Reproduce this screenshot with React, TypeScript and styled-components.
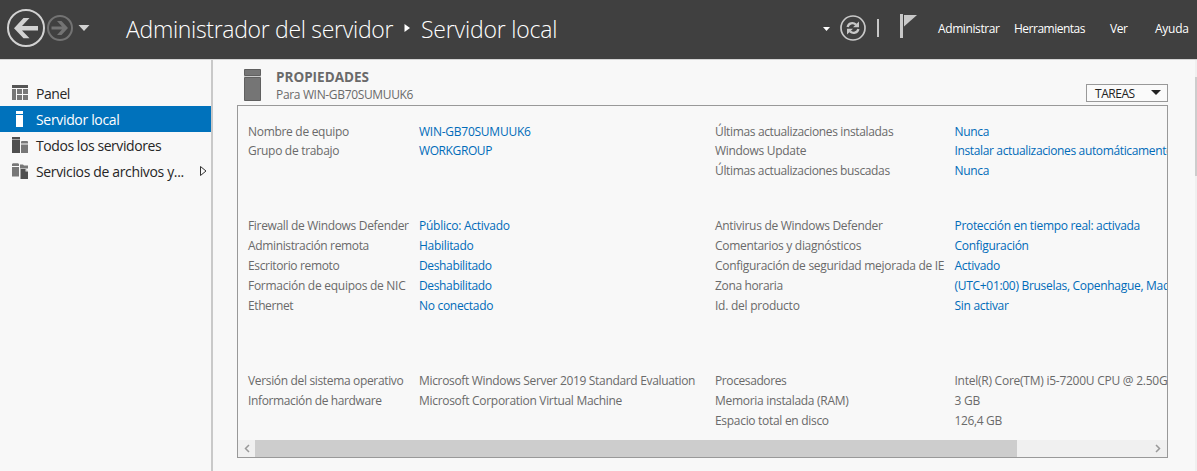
import React from 'react';
import styled, { createGlobalStyle } from 'styled-components';

const Global = createGlobalStyle`
  * { box-sizing: border-box; }
  body { margin: 0; background: #f8f8f8; overflow: hidden; }
`;
const font = `'Open Sans', 'Noto Sans', sans-serif`;

const Window = styled.div`
  width: 1197px; height: 471px; display: flex; flex-direction: column;
  font-family: ${font}; font-size: 12px; color: #6a6a6a; background: #f8f8f8;
  white-space: nowrap; overflow: hidden;
`;
const Header = styled.header`
  height: 60px; flex: none; display: flex; background: #404040; color: #fff;
  border-bottom: 1px solid #d4d4d4;
`;
const NavButtons = styled.div`width: 126px; flex: none;`;
const Crumbs = styled.h1<{ $space: number }>`
  margin: 0; flex: none; font-size: 23px; font-weight: 300; line-height: 59px;
  letter-spacing: ${p => p.$space}px;
`;
const CrumbFirst = styled(Crumbs)`width: 277px;`;
const CrumbArrow = styled.svg`width: 18px; height: 59px; flex: none;`;
const Tools = styled.div`margin-left: auto; width: 118px; flex: none;`;
const Menu = styled.nav`display: flex; width: 259px; flex: none; line-height: 58px; color: #fff;`;
const MenuItem = styled.span<{ $w: number; $space?: number }>`
  width: ${p => p.$w}px; flex: none; letter-spacing: ${p => p.$space ?? 0}px;
`;
const Body = styled.div`display: flex; flex: 1; min-height: 0;`;
const Sidebar = styled.aside`
  width: 213px; flex: none; padding-top: 20px; border-right: 2px solid #c9c9c9;
`;
const SideItem = styled.div<{ $active?: boolean; $space?: number }>`
  height: 26px; display: flex; align-items: center; padding-left: 11px; font-size: 14px;
  letter-spacing: ${p => p.$space ?? 0}px;
  color: ${p => (p.$active ? '#fff' : '#262626')};
  background: ${p => (p.$active ? '#0072bc' : 'transparent')};
`;
const SideIcon = styled.svg`width: 18px; height: 18px; flex: none; margin-right: 7px;`;
const Expand = styled.svg`width: 9px; height: 12px; margin-left: auto; margin-right: 3px;`;
const Main = styled.main`flex: 1; padding: 7px 27px 0 24px; min-width: 0;`;
const PanelHead = styled.div`display: flex; height: 38px;`;
const ServerIcon = styled.svg`width: 24px; height: 38px; margin-left: 6px; margin-right: 9px; flex: none;`;
const Heading = styled.h2`
  margin: 0; font-size: 13.5px; line-height: 20px; font-weight: 700; color: #6a6a6a; letter-spacing: 0;
`;
const Sub = styled.div`line-height: 15px; letter-spacing: -0.34px;`;
const Tasks = styled.button`
  margin: 17px 0 0 auto; width: 82px; height: 18px; padding: 0 6px 0 8px; border: 1px solid #999;
  background: #fafafa; color: #222; font: 12px ${font}; letter-spacing: -0.45px;
  display: flex; align-items: center; justify-content: space-between;
`;
const Panel = styled.section`
  width: 931px; height: 353px; border: 1px solid #999; display: flex; flex-direction: column; overflow: hidden;
`;
const Content = styled.div`flex: 1; padding: 15px 0 0 10px;`;
const Group = styled.div<{ $gap: number }>`margin-bottom: ${p => p.$gap}px;`;
const Row = styled.div`
  display: grid; grid-template-columns: 171px 296px 239.5px 260px; height: 20px; line-height: 20px;
  ${Group}:first-child &:first-child { line-height: 22px; }
`;
const Cell = styled.span<{ $link?: boolean; $space: number }>`
  color: ${p => (p.$link ? '#006bb8' : '#6a6a6a')}; letter-spacing: ${p => p.$space}px;
`;
const HScroll = styled.div`height: 17px; flex: none; display: flex; background: #f0f0f0;`;
const ScrollArrow = styled.svg`width: 17px; height: 17px; flex: none;`;
const Thumb = styled.div`width: 762px; background: #cdcdcd; margin-right: auto;`;
const VScroll = styled.div`width: 2px; flex: none; padding-top: 17px; background: #f0f0f0;`;
const VThumb = styled.div`height: 99px; background: #cdcdcd;`;

type CellData = [text: string, space?: number];
type RowData = { cells: CellData[] };
const D = -0.3;
const groups: { gap: number; link: boolean; rows: RowData[] }[] = [
  { gap: 35, link: true, rows: [
    { cells: [['Nombre de equipo'], ['WIN-GB70SUMUUK6', -0.25], ['Últimas actualizaciones instaladas', -0.35], ['Nunca']] },
    { cells: [['Grupo de trabajo'], ['WORKGROUP', -0.4], ['Windows Update'], ['Instalar actualizaciones automáticamente', -0.36]] },
    { cells: [[''], [''], ['Últimas actualizaciones buscadas', -0.36], ['Nunca']] },
  ] },
  { gap: 55, link: true, rows: [
    { cells: [['Firewall de Windows Defender', -0.33], ['Público: Activado', -0.25], ['Antivirus de Windows Defender'], ['Protección en tiempo real: activada', -0.32]] },
    { cells: [['Administración remota', -0.36], ['Habilitado'], ['Comentarios y diagnósticos'], ['Configuración']] },
    { cells: [['Escritorio remoto', -0.35], ['Deshabilitado', -0.35], ['Configuración de seguridad mejorada de IE', -0.29], ['Activado']] },
    { cells: [['Formación de equipos de NIC', -0.27], ['Deshabilitado', -0.35], ['Zona horaria', -0.35], ['(UTC+01:00) Bruselas, Copenhague, Madrid, París']] },
    { cells: [['Ethernet', -0.4], ['No conectado'], ['Id. del producto', -0.25], ['Sin activar']] },
  ] },
  { gap: 0, link: false, rows: [
    { cells: [['Versión del sistema operativo', -0.34], ['Microsoft Windows Server 2019 Standard Evaluation', -0.33], ['Procesadores', -0.4], ['Intel(R) Core(TM) i5-7200U CPU @ 2.50GHz', -0.25]] },
    { cells: [['Información de hardware', -0.37], ['Microsoft Corporation Virtual Machine'], ['Memoria instalada (RAM)'], ['3 GB', -0.25]] },
    { cells: [[''], [''], ['Espacio total en disco'], ['126,4 GB', -0.35]] },
  ] },
];

export default function App() {
  return (
    <Window>
      <Global />
      <Header>
        <NavButtons>
          <svg width="126" height="59" fill="none">
            <circle cx="26" cy="28" r="18" stroke="#d2d2d2" strokeWidth="2" />
            <path d="M14 28.300 23.500 18H29.500L22 26H38V30.600H22L29.500 38.300H23.500Z" fill="#d2d2d2" />
            <circle cx="60" cy="28" r="12" stroke="#737373" strokeWidth="2" />
            <path d="M68 28 61.500 21H57L62 26.500H51.500V29.500H62L57 35H61.500Z" fill="#737373" />
            <path d="M78.500 25H89.500L84 31Z" fill="#d2d2d2" />
          </svg>
        </NavButtons>
        <CrumbFirst $space={-0.31}>Administrador del servidor</CrumbFirst>
        <CrumbArrow><path d="M1.500 24 7 28 1.500 32Z" fill="#fff" /></CrumbArrow>
        <Crumbs $space={-0.2}>Servidor local</Crumbs>
        <Tools>
          <svg width="118" height="59" fill="none">
            <path d="M3 27H10L6.500 31Z" fill="#fff" />
            <circle cx="33" cy="28" r="12" stroke="#c8c8c8" strokeWidth="1.700" />
            <path d="M27.600 27C28.500 23 33 22 36 24.600M38.400 29C37.500 33 33 34 30 31.400" stroke="#c8c8c8" strokeWidth="2.300" />
            <path d="M39 21.500V27.300H33ZM27 34.500V28.700H33Z" fill="#c8c8c8" />
            <path d="M57 19H59V37H57Z" fill="#c8c8c8" />
            <path d="M80 14H83V38H80Z" fill="#c8c8c8" />
            <path d="M84 15H97L84 26.500Z" fill="#c8c8c8" />
          </svg>
        </Tools>
        <Menu>
          <MenuItem $w={76} $space={-0.4}>Administrar</MenuItem>
          <MenuItem $w={96} $space={-0.5}>Herramientas</MenuItem>
          <MenuItem $w={45} $space={-0.4}>Ver</MenuItem>
          <MenuItem $w={42} $space={-0.25}>Ayuda</MenuItem>
        </Menu>
      </Header>
      <Body>
        <Sidebar>
          <SideItem $space={-0.45}>
            <SideIcon><path d="M1 1H17V4H1Z" fill="#555" /><path d="M1 5H5V16H1ZM6 5H11V10H6ZM12 5H17V10H12ZM6 11H11V16H6ZM12 11H17V16H12Z" fill="#777" /></SideIcon>
            Panel
          </SideItem>
          <SideItem $active $space={-0.33}>
            <SideIcon><path d="M5 1H12V4H5ZM5 5H12V17H5Z" fill="#fff" /></SideIcon>
            Servidor local
          </SideItem>
          <SideItem $space={-0.43}>
            <SideIcon><path d="M1 1H9V3.500H1ZM1 4H9V17H1Z" fill="#4f4f4f" /><path d="M10 5.500 11 5H16L17 5.500V7.500H10ZM10 8.500H17V17H10Z" fill="#777" /></SideIcon>
            Todos los servidores
          </SideItem>
          <SideItem $space={-0.35}>
            <SideIcon><path d="M1 2 2 1.300H7L8 2V4H1ZM1 5H8V14.500H1Z" fill="#777" /><path d="M9 2.500H12L13 3.500H17V6.500H9Z" fill="#777" /><path d="M9.500 7H14.500L17 9.500V17H9.500Z" fill="#4f4f4f" /><path d="M14.500 7V9.500H17Z" fill="#ddd" /></SideIcon>
            Servicios de archivos y...
            <Expand><path d="M1.500 1.500 7 6 1.500 10.500Z" fill="none" stroke="#333" /></Expand>
          </SideItem>
        </Sidebar>
        <Main>
          <PanelHead>
            <ServerIcon>
              <path d="M1.500 2.500H17.500V8.500H1.500ZM1.500 10.500H17.500V33.500H1.500Z" fill="#757575" stroke="#606060" />
              <path d="M1 9H18V10H1Z" fill="#ccc" />
            </ServerIcon>
            <div>
              <Heading>PROPIEDADES</Heading>
              <Sub>Para WIN-GB70SUMUUK6</Sub>
            </div>
            <Tasks>
              TAREAS
              <svg width="10" height="6"><path d="M0 0H10L5 5Z" fill="#222" /></svg>
            </Tasks>
          </PanelHead>
          <Panel>
            <Content>
              {groups.map((g, gi) => (
                <Group key={gi} $gap={g.gap}>
                  {g.rows.map((r, ri) => (
                    <Row key={ri}>
                      {r.cells.map(([text, space], ci) => (
                        <Cell key={ci} $link={g.link && ci % 2 === 1} $space={space ?? D}>{text}</Cell>
                      ))}
                    </Row>
                  ))}
                </Group>
              ))}
            </Content>
            <HScroll>
              <ScrollArrow><path d="M11 5 7.500 8.500 11 12" fill="none" stroke="#999" strokeWidth="1.500" /></ScrollArrow>
              <Thumb />
              <ScrollArrow><path d="M6 5 9.500 8.500 6 12" fill="none" stroke="#999" strokeWidth="1.500" /></ScrollArrow>
            </HScroll>
          </Panel>
        </Main>
        <VScroll><VThumb /></VScroll>
      </Body>
    </Window>
  );
}
